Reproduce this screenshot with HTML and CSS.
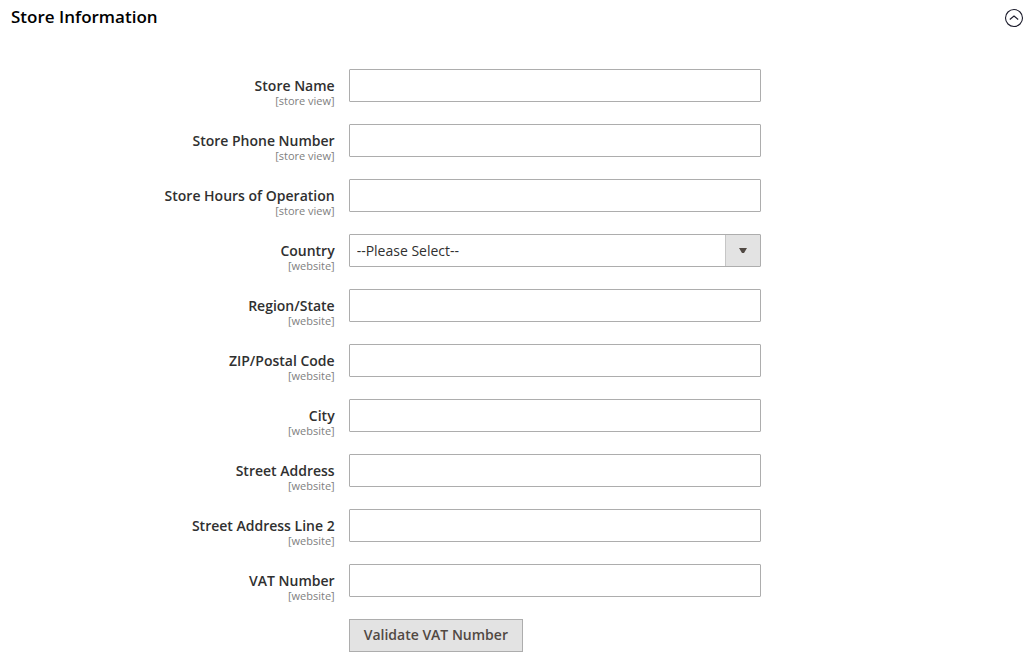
FILE: index.html
```html
<!DOCTYPE html>
<html lang="en">
<head>
<meta charset="utf-8">
<title>Store Information</title>
<link rel="stylesheet" href="styles.css">
</head>
<body>
<form class="section">
  <header class="section-header">
    <h1 class="section-title">Store Information</h1>
    <button class="toggle" type="button" aria-label="Collapse section" aria-expanded="true">
      <svg class="toggle-icon" viewBox="0 0 20 20" aria-hidden="true"><circle cx="10" cy="10" r="8.5"/><path d="M5.8 11.5 10 8l4.2 3.5"/></svg>
    </button>
  </header>
  <div class="fields">
    <div class="field"><label class="label" for="name">Store Name<span class="scope">[store view]</span></label><input class="control" id="name" type="text"></div>
    <div class="field"><label class="label" for="phone">Store Phone Number<span class="scope">[store view]</span></label><input class="control" id="phone" type="text"></div>
    <div class="field"><label class="label" for="hours">Store Hours of Operation<span class="scope">[store view]</span></label><input class="control" id="hours" type="text"></div>
    <div class="field"><label class="label" for="country">Country<span class="scope">[website]</span></label><select class="control select" id="country"><option>--Please Select--</option></select></div>
    <div class="field"><label class="label" for="region">Region/State<span class="scope">[website]</span></label><input class="control" id="region" type="text"></div>
    <div class="field"><label class="label" for="zip">ZIP/Postal Code<span class="scope">[website]</span></label><input class="control" id="zip" type="text"></div>
    <div class="field"><label class="label" for="city">City<span class="scope">[website]</span></label><input class="control" id="city" type="text"></div>
    <div class="field"><label class="label" for="street">Street Address<span class="scope">[website]</span></label><input class="control" id="street" type="text"></div>
    <div class="field"><label class="label" for="street2">Street Address Line 2<span class="scope">[website]</span></label><input class="control" id="street2" type="text"></div>
    <div class="field"><label class="label" for="vat">VAT Number<span class="scope">[website]</span></label><input class="control" id="vat" type="text"></div>
    <div class="field"><button class="validate" type="button">Validate VAT Number</button></div>
  </div>
</form>
</body>
</html>
```
FILE: styles.css
```css
* {
  box-sizing: border-box;
}

body {
  margin: 0;
  background: #fff;
  color: #303030;
  font-family: "Open Sans", sans-serif;
  font-size: 14px;
}

.section-header {
  display: flex;
  align-items: flex-end;
  justify-content: space-between;
  padding: 6px 8px 0 11px;
}

.section-title {
  margin: 0;
  color: #000;
  font-size: 17px;
  font-weight: 600;
  line-height: 22px;
}

.toggle {
  display: flex;
  padding: 0;
  border: 0;
  background: none;
}

.toggle-icon {
  width: 20px;
  height: 20px;
  fill: none;
  stroke: #1c1c2c;
  stroke-width: 1.1;
}

.fields {
  display: grid;
  gap: 22px;
  padding: 41px 0 13px;
}

.field {
  display: grid;
  grid-template-columns: 13fr 16fr 10fr;
  column-gap: 14px;
  height: 33px;
}

.label {
  padding-top: 8px;
  font-weight: 600;
  line-height: 18px;
  text-align: right;
}

.scope {
  display: block;
  color: #808080;
  font-size: 11px;
  font-weight: 400;
  line-height: 12px;
}

.control {
  width: 100%;
  height: 33px;
  padding: 0 7px;
  border: 1px solid #adadad;
  border-radius: 1px;
  background: #fff;
  color: #303030;
  font: inherit;
}

.select {
  appearance: none;
  background:
    url("data:image/svg+xml,%3Csvg xmlns='http://www.w3.org/2000/svg' width='35' height='31'%3E%3Cpath fill='%23e3e3e3' d='M0 0h35v31H0z'/%3E%3Cpath fill='%23c6c6c6' d='M0 0h1v31H0z'/%3E%3Cpath fill='%23514943' d='M14 13h8l-3 5h-2z'/%3E%3C/svg%3E")
    right center no-repeat #fff;
}

.validate {
  grid-column: 2;
  justify-self: start;
  padding: 0 14px 2px;
  border: 1px solid #adadad;
  background: #e3e3e3;
  color: #514943;
  font: inherit;
  font-weight: 600;
}
```
